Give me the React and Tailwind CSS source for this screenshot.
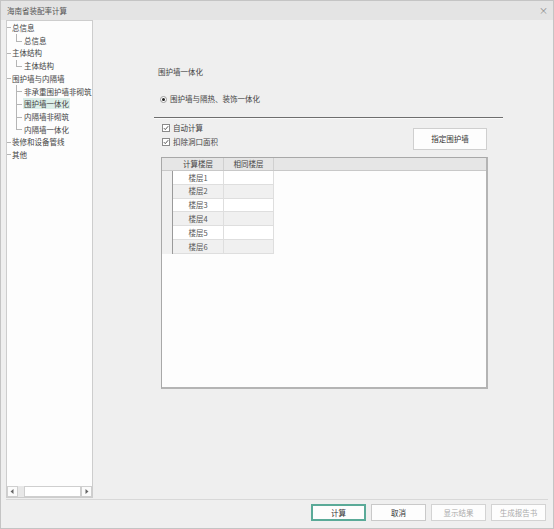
import React from 'react';

const FONT = { fontFamily: '"Noto Sans CJK SC", "Noto Sans", sans-serif' };

const treeItems = [
  { label: '总信息', level: 0 },
  { label: '总信息', level: 1, last: true },
  { label: '主体结构', level: 0 },
  { label: '主体结构', level: 1, last: true },
  { label: '围护墙与内隔墙', level: 0 },
  { label: '非承重围护墙非砌筑', level: 1 },
  { label: '围护墙一体化', level: 1, selected: true },
  { label: '内隔墙非砌筑', level: 1 },
  { label: '内隔墙一体化', level: 1, last: true },
  { label: '装修和设备管线', level: 0 },
  { label: '其他', level: 0 },
];

const floors = ['楼层1', '楼层2', '楼层3', '楼层4', '楼层5', '楼层6'];

// one row of the tree, with its connector lines
const TreeRow = ({ item }) => {
  if (item.level === 0) {
    return (
      <div className="h-[12.7px] flex items-center whitespace-nowrap">
        <div className="w-[4px] h-px bg-[#b5b5b5] shrink-0" />
        <span className="pl-[1px] text-[7.5px] leading-none text-[#444]">{item.label}</span>
      </div>
    );
  }
  return (
    <div className="h-[12.7px] flex items-center whitespace-nowrap">
      <div className="w-[9px] shrink-0" />
      <div className="relative w-[6px] h-full shrink-0">
        {/* vertical line */}
        <div className={`absolute left-0 top-0 w-px bg-[#b5b5b5] ${item.last ? 'h-1/2' : 'h-full'}`} />
        {/* horizontal tick */}
        <div className="absolute left-0 top-1/2 w-[6px] h-px bg-[#b5b5b5]" />
      </div>
      <span
        className={`ml-[1px] px-[1px] h-[11px] shrink-0 flex items-center text-[7.5px] leading-none text-[#444] ${
          item.selected ? 'bg-[#dcefe9]' : ''
        }`}
      >
        {item.label}
      </span>
    </div>
  );
};

const Btn = ({ children, primary, disabled }) => (
  <button
    className={`h-[17px] w-[55px] flex items-center justify-center text-[7.5px] leading-none bg-[#fdfdfd] ${
      primary
        ? 'border-2 border-[#5aaa98] text-[#333]'
        : disabled
        ? 'border border-[#d3d3d3] text-[#aaa]'
        : 'border border-[#c9c9c9] text-[#333]'
    }`}
  >
    {children}
  </button>
);

const Check = ({ label }) => (
  <div className="h-[14px] flex items-center gap-[3px]">
    <div className="w-[8px] h-[8px] border border-[#8a8a8a] bg-white flex items-center justify-center">
      <svg width="6" height="6" viewBox="0 0 6 6">
        <path d="M0.8 3.1 L2.3 4.6 L5.2 1.2" fill="none" stroke="#444" strokeWidth="0.9" />
      </svg>
    </div>
    <span className="text-[7.5px] leading-none text-[#444]">{label}</span>
  </div>
);

export default function App() {
  return (
    <div style={FONT} className="w-[554px] h-[529px] bg-[#efefef] border border-[#c4c4c4] flex flex-col overflow-hidden">
      {/* title bar */}
      <div className="h-[19px] bg-[#e4e4e4] flex items-center justify-between pl-[6px] pr-[5px] shrink-0">
        <span className="text-[7.5px] leading-none text-[#555]">海南省装配率计算</span>
        <span className="text-[9px] leading-none text-[#888]">×</span>
      </div>

      {/* body */}
      <div className="flex-1 flex pl-[5px] min-h-0">
        {/* tree */}
        <div className="w-[87px] h-full bg-[#fdfdfd] border border-[#cdcdcd] flex flex-col">
          <div className="flex-1 pt-[0.5px] overflow-hidden">
            {treeItems.map((item, i) => (
              <TreeRow key={i} item={item} />
            ))}
          </div>
          {/* horizontal scrollbar */}
          <div className="h-[11px] flex bg-[#e8e8e8] shrink-0">
            <div className="w-[11px] h-full bg-[#fbfbfb] border border-[#cfcfcf] flex items-center justify-center">
              <svg width="4" height="5" viewBox="0 0 4 5"><path d="M3.5 0 L0.5 2.5 L3.5 5 Z" fill="#666" /></svg>
            </div>
            <div className="w-[6px]" />
            <div className="w-[58px] h-full bg-white border border-[#cfcfcf]" />
            <div className="flex-1" />
            <div className="w-[11px] h-full bg-[#fbfbfb] border border-[#cfcfcf] flex items-center justify-center">
              <svg width="4" height="5" viewBox="0 0 4 5"><path d="M0.5 0 L3.5 2.5 L0.5 5 Z" fill="#666" /></svg>
            </div>
          </div>
        </div>

        {/* right content */}
        <div className="flex-1 pl-[61px] pt-[46px]">
          <div className="h-[12px] pl-[4px] flex items-center text-[7.5px] leading-none text-[#444]">围护墙一体化</div>

          <div className="mt-[15px] h-[12px] pl-[6px] flex items-center gap-[3px]">
            <div className="w-[7px] h-[7px] rounded-full border border-[#9a9a9a] bg-white flex items-center justify-center">
              <div className="w-[3px] h-[3px] rounded-full bg-[#222]" />
            </div>
            <span className="text-[7.5px] leading-none text-[#444]">围护墙与隔热、装饰一体化</span>
          </div>

          <div className="mt-[12px] w-[349px] h-[2px] border-t border-[#6e6e6e] border-b border-b-[#fafafa]" />

          <div className="ml-[7px] w-[327px]">
            <div className="mt-[2px] flex justify-between">
              <div className="flex flex-col pl-[1px]">
                <Check label="自动计算" />
                <Check label="扣除洞口面积" />
              </div>
              <button className="mt-[7px] mr-[1px] w-[74px] h-[22px] bg-[#fdfdfd] border border-[#cfcfcf] text-[7.5px] leading-none text-[#333]">
                指定围护墙
              </button>
            </div>

            {/* grid */}
            <div className="mt-[7px] h-[232px] bg-[#fdfdfd] border border-[#a8a8a8] border-r-2 border-b-2 border-r-[#b4b4b4] border-b-[#b4b4b4]">
              <div className="h-[13px] bg-[#e6e6e6] border-b border-[#c8c8c8] flex">
                <div className="w-[11px]" />
                <div className="w-[51px] flex items-center justify-center text-[7.5px] leading-none text-[#444] border-r border-[#d0d0d0]">计算楼层</div>
                <div className="w-[50px] flex items-center justify-center text-[7.5px] leading-none text-[#444] border-r border-[#d0d0d0]">相同楼层</div>
              </div>
              {floors.map((f, i) => (
                <div key={f} className="h-[13.8px] flex">
                  <div className="w-[11px] bg-[#f0f0f0] border-r border-[#9a9a9a]" />
                  <div
                    className={`w-[51px] flex items-center justify-center text-[7.5px] leading-none text-[#555] border-r border-b border-[#dedede] ${
                      i % 2 ? 'bg-[#f0f0f0]' : 'bg-white'
                    }`}
                  >
                    {f}
                  </div>
                  <div
                    className={`w-[50px] border-r border-b border-[#dedede] ${i % 2 ? 'bg-[#f0f0f0]' : 'bg-white'}`}
                  />
                </div>
              ))}
            </div>
          </div>
        </div>
      </div>

      {/* bottom buttons */}
      <div className="h-[29px] shrink-0 mx-[5px] mt-[1px] border-t border-[#d8d8d8] flex justify-end items-start pt-[4px] pr-[2px] gap-[5px]">
        <Btn primary>计算</Btn>
        <Btn>取消</Btn>
        <Btn disabled>显示结果</Btn>
        <Btn disabled>生成报告书</Btn>
      </div>
    </div>
  );
}
